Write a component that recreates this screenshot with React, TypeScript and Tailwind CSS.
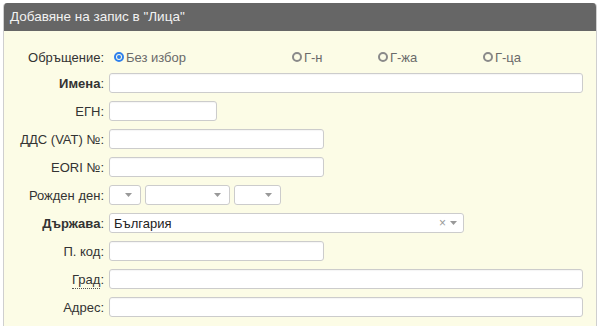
import React from "react";

const font = { fontFamily: '"Liberation Sans", Arial, sans-serif' };

function Label({ children }: { children: React.ReactNode }) {
  return (
    <div className="w-[105px] shrink-0 pr-[5px] text-right text-[13px] text-[#333] leading-none">
      {children}
    </div>
  );
}

function Input({ w }: { w: string }) {
  return <div className={`h-[20px] ${w} rounded-[3px] border border-[#ccc] bg-white shadow-[inset_0_1px_1px_rgba(0,0,0,0.04)]`} />;
}

function Arrow() {
  return (
    <svg width="7" height="4" viewBox="0 0 7 4" className="shrink-0">
      <path d="M0 0 L7 0 L3.5 4 Z" fill="#999" />
    </svg>
  );
}

function Select({ w }: { w: string }) {
  return (
    <div className={`h-[20px] ${w} flex items-center justify-end pr-[8px] rounded-[3px] border border-[#ccc] bg-white`}>
      <Arrow />
    </div>
  );
}

function Radio({ checked, label, w }: { checked?: boolean; label: string; w: string }) {
  return (
    <div className={`flex items-center ${w} shrink-0`}>
      {checked ? (
        <span className="w-[10px] h-[10px] rounded-full border-[2px] border-[#2f80ed] flex items-center justify-center">
          <span className="w-[4px] h-[4px] rounded-full bg-[#2f80ed]" />
        </span>
      ) : (
        <span className="w-[10px] h-[10px] rounded-full border-[2px] border-[#8a8a8a]" />
      )}
      <span className="ml-[2px] text-[13px] text-[#6a6a6a] leading-none">{label}</span>
    </div>
  );
}

function Row({ children }: { children: React.ReactNode }) {
  return <div className="h-[28px] flex items-center">{children}</div>;
}

export default function App() {
  return (
    <div className="w-[600px] h-[326px] bg-white pt-[3px] px-[3px] overflow-hidden" style={font}>
      <div className="h-full rounded-t-[4px] overflow-hidden border-x border-[#cfcfcf] flex flex-col">
        <div className="h-[28px] shrink-0 bg-[#666666] text-[#f2f2f2] text-[13.5px] flex items-center pl-[6px]">
          Добавяне на запис в "Лица"
        </div>
        <div className="flex-1 bg-[#fcfce6] pt-[14px]">
          <div className="h-[24px] flex items-center">
            <Label>Обръщение:</Label>
            <div className="flex items-center pl-[5px]">
              <Radio checked label="Без избор" w="w-[178px]" />
              <Radio label="Г-н" w="w-[86px]" />
              <Radio label="Г-жа" w="w-[105px]" />
              <Radio label="Г-ца" w="w-[60px]" />
            </div>
          </div>
          <Row>
            <Label>
              <b>Имена</b>:
            </Label>
            <Input w="w-[474px]" />
          </Row>
          <Row>
            <Label>ЕГН:</Label>
            <Input w="w-[108px]" />
          </Row>
          <Row>
            <Label>ДДС (VAT) №:</Label>
            <Input w="w-[215px]" />
          </Row>
          <Row>
            <Label>EORI №:</Label>
            <Input w="w-[215px]" />
          </Row>
          <Row>
            <Label>Рожден ден:</Label>
            <div className="flex gap-[4px]">
              <Select w="w-[32px]" />
              <Select w="w-[85px]" />
              <Select w="w-[47px]" />
            </div>
          </Row>
          <Row>
            <Label>
              <b>Държава</b>:
            </Label>
            <div className="h-[20px] w-[355px] flex items-center rounded-[3px] border border-[#ccc] bg-white pl-[4px] pr-[6px]">
              <span className="flex-1 text-[13px] text-[#222] leading-none">България</span>
              <span className="text-[12px] text-[#999] leading-none mr-[4px]">×</span>
              <Arrow />
            </div>
          </Row>
          <Row>
            <Label>П. код:</Label>
            <Input w="w-[215px]" />
          </Row>
          <Row>
            <Label>
              <span className="border-b border-dotted border-[#555] pb-[1px]">Град</span>:
            </Label>
            <Input w="w-[474px]" />
          </Row>
          <Row>
            <Label>Адрес:</Label>
            <Input w="w-[474px]" />
          </Row>
        </div>
      </div>
    </div>
  );
}
